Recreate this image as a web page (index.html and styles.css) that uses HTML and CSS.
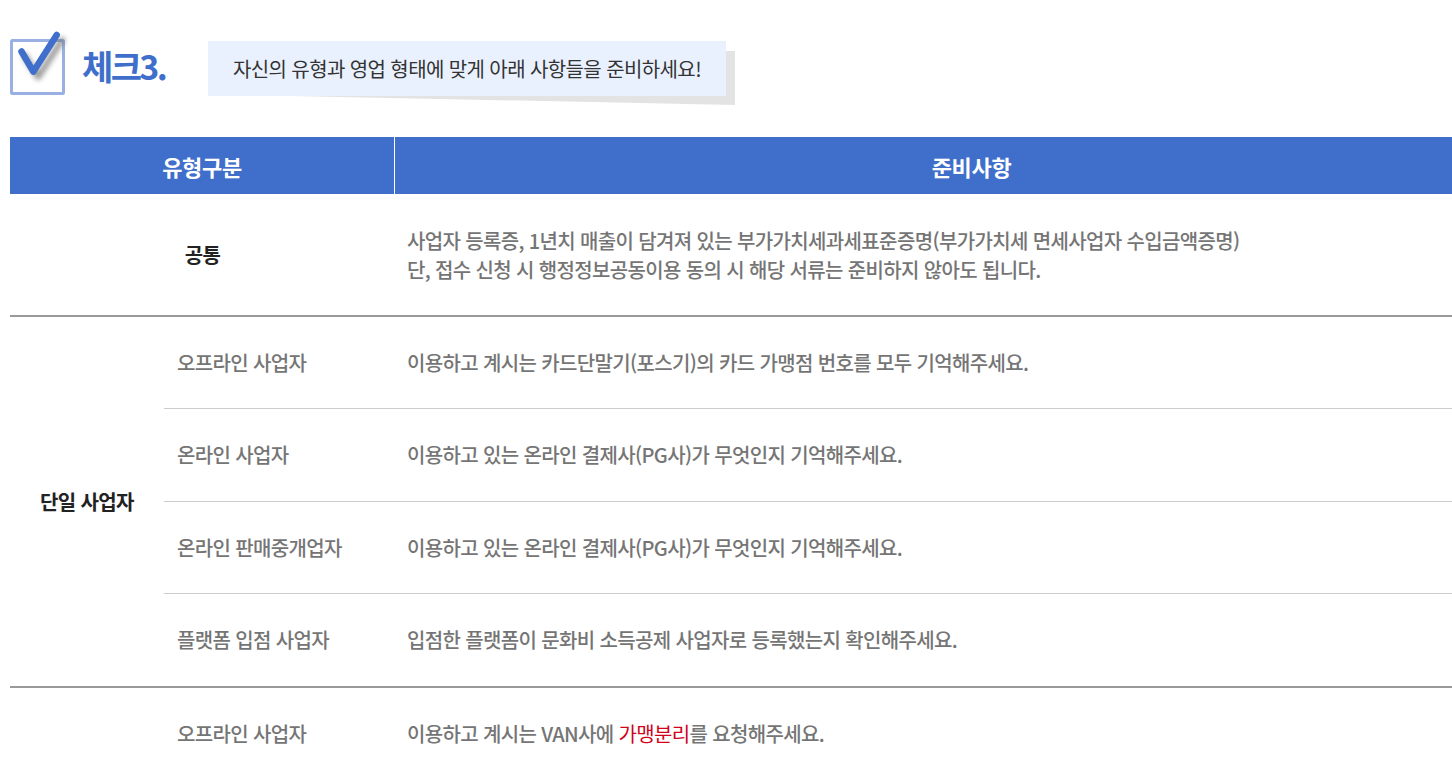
FILE: index.html
```html
<!DOCTYPE html>
<html lang="ko">
<head>
<meta charset="utf-8">
<title>체크3</title>
<link rel="stylesheet" href="styles.css">
</head>
<body>
<main class="page">
  <header class="head">
    <svg class="check" width="60" height="72" viewBox="0 0 60 72" aria-hidden="true">
      <defs><filter id="blur" x="-30%" y="-30%" width="160%" height="160%"><feGaussianBlur stdDeviation="2.500"/></filter></defs>
      <rect x="1.500" y="11.500" width="52" height="53" rx="1" fill="#fff" stroke="#98b1e2" stroke-width="3"/>
      <path d="M15 27 L28 48 L52 11" fill="none" stroke="#666" stroke-width="6" stroke-linecap="round" stroke-linejoin="round" filter="url(#blur)" opacity=".65"/>
      <path d="M11.500 22.500 L23.300 42.700 L46.700 6" fill="none" stroke="#3f6fcb" stroke-width="6.500" stroke-linecap="round" stroke-linejoin="round"/>
    </svg>
    <h1 class="title">체크3.</h1>
    <div class="note"><p class="note-text">자신의 유형과 영업 형태에 맞게 아래 사항들을 준비하세요!</p></div>
  </header>
  <table class="sheet">
    <colgroup><col class="c1"><col class="c2"><col></colgroup>
    <thead>
      <tr><th colspan="2" class="th-left">유형구분</th><th class="th-right">준비사항</th></tr>
    </thead>
    <tbody>
      <tr class="group-end r1">
        <td colspan="2" class="key">공통</td>
        <td class="val">사업자 등록증, 1년치 매출이 담겨져 있는 부가가치세과세표준증명(부가가치세 면세사업자 수입금액증명)<br>단, 접수 신청 시 행정정보공동이용 동의 시 해당 서류는 준비하지 않아도 됩니다.</td>
      </tr>
      <tr class="r2">
        <td rowspan="4" class="key group-cell">단일 사업자</td>
        <td class="sub">오프라인 사업자</td>
        <td class="val">이용하고 계시는 카드단말기(포스기)의 카드 가맹점 번호를 모두 기억해주세요.</td>
      </tr>
      <tr class="r3">
        <td class="sub">온라인 사업자</td>
        <td class="val">이용하고 있는 온라인 결제사(PG사)가 무엇인지 기억해주세요.</td>
      </tr>
      <tr class="r4">
        <td class="sub">온라인 판매중개업자</td>
        <td class="val">이용하고 있는 온라인 결제사(PG사)가 무엇인지 기억해주세요.</td>
      </tr>
      <tr class="group-end r5">
        <td class="sub">플랫폼 입점 사업자</td>
        <td class="val">입점한 플랫폼이 문화비 소득공제 사업자로 등록했는지 확인해주세요.</td>
      </tr>
      <tr class="r6">
        <td class="key"></td>
        <td class="sub">오프라인 사업자</td>
        <td class="val">이용하고 계시는 VAN사에 <span class="red">가맹분리</span>를 요청해주세요.</td>
      </tr>
    </tbody>
  </table>
</main>
</body>
</html>
```

FILE: styles.css
```css
html, body { margin: 0; padding: 0; overflow: hidden; height: 763px; }
html { background: #fff; }
body { font-family: "Noto Sans CJK KR", "Noto Sans", sans-serif; color: #666; }
.page { padding: 20px 0 0 10px; }
.head { display: flex; align-items: flex-start; height: 117px; isolation: isolate; }
.check { flex: none; margin-top: 9px; }
.title { margin: 26px 0 0 12px; width: 126px; font-size: 34px; line-height: 40px; font-weight: 700; letter-spacing: -2.6px; color: #3f6fcb; }
.note { position: relative; margin-top: 21px; width: 518px; height: 55px; background: #eaf1fe; display: flex; align-items: center; justify-content: center; }
.note::after { content: ""; position: absolute; z-index: -1; left: 0; right: -9px; top: 10px; bottom: -9px; background: #e3e3e3; clip-path: polygon(100% 0, 100% 100%, 0 80%, 0 0); }
.note-text { margin: 0; font-size: 20px; line-height: 26px; color: #333; letter-spacing: -0.6px; }
.sheet { width: 1442px; table-layout: fixed; border-collapse: separate; border-spacing: 0; }
.c1 { width: 154px; }
.c2 { width: 231px; }
th { height: 57px; padding: 0; background: #3f6fcb; color: #fff; font-size: 22px; font-weight: 700; letter-spacing: -0.3px; text-align: center; }
.th-left { border-right: 1px solid #fff; }
.th-right { padding-left: 96px; }
td { padding: 0; font-size: 20px; line-height: 30px; letter-spacing: -0.64px; }
.key { color: #222; font-weight: 700; text-align: center; }
.sub { padding-left: 13px; font-weight: 500; color: #757575; border-bottom: 1px solid #ccc; }
.val { padding-left: 12px; color: #757575; border-bottom: 1px solid #ccc; font-weight: 500; }
.r1 td { height: 121px; }
.r1 .val { line-height: 29px; }
.r2 td { height: 91px; }
.r3 td { height: 92px; }
.r4 td { height: 91px; }
.r5 td { height: 92px; }
.r6 td { height: 92px; }
.group-end td { border-bottom: 2px solid #999; }
.group-cell { border-bottom: 2px solid #999; }
.r6 td { border-bottom: 0; }
.red { color: #d0021b; font-weight: 400; }
```
